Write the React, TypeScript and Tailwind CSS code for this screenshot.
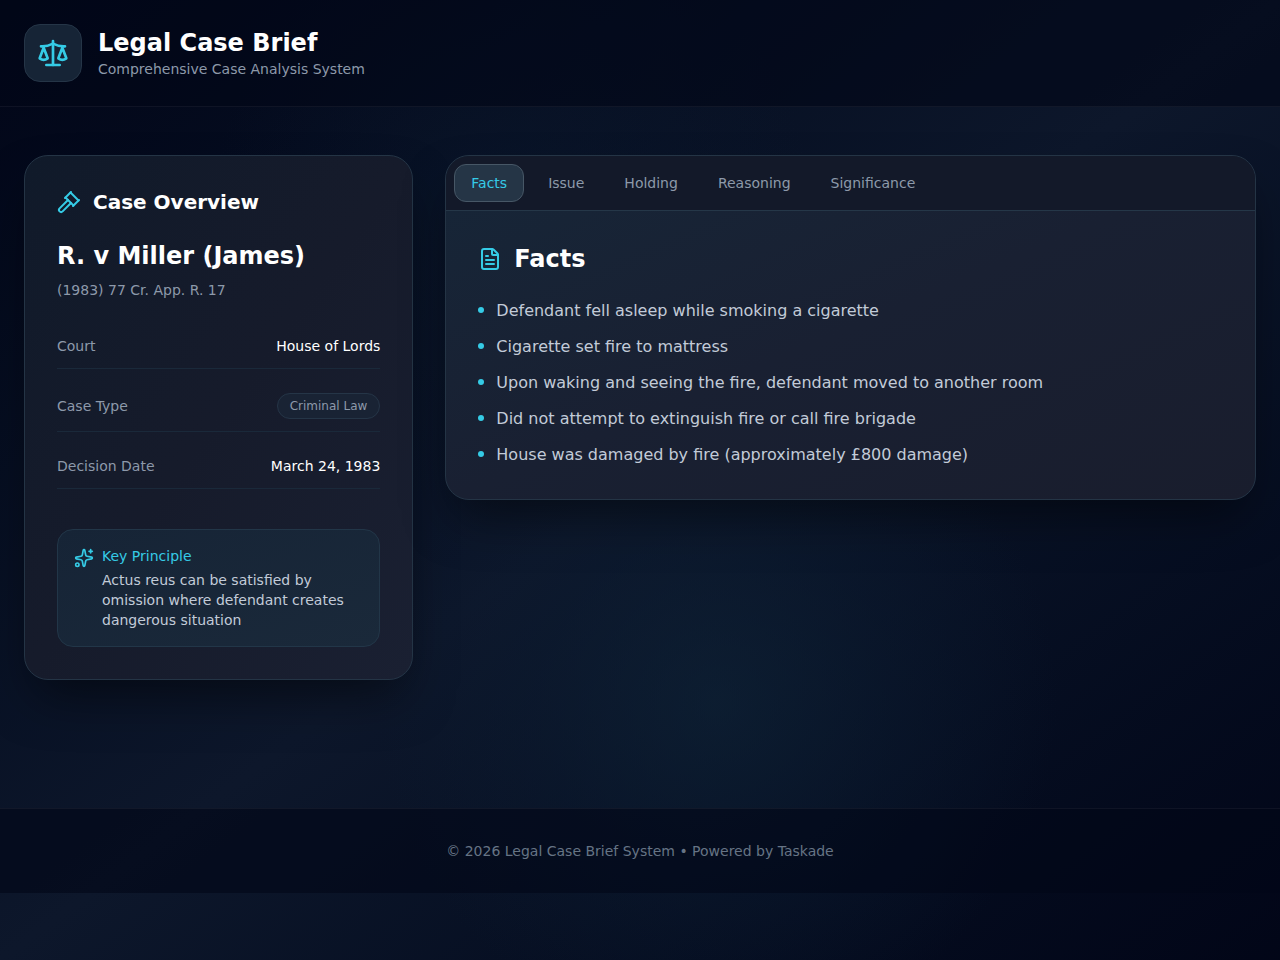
import { useState } from "react";
import { FileText, Gavel, Scale, Sparkles } from "lucide-react";

const tabs = ["Facts", "Issue", "Holding", "Reasoning", "Significance"];

const points: Record<string, string[]> = {
  Facts: [
    "Defendant fell asleep while smoking a cigarette",
    "Cigarette set fire to mattress",
    "Upon waking and seeing the fire, defendant moved to another room",
    "Did not attempt to extinguish fire or call fire brigade",
    "House was damaged by fire (approximately £800 damage)",
  ],
};

function SiteHeader() {
  return (
    <header className="border-b border-white/5 bg-slate-950/60">
      <div className="mx-auto flex max-w-7xl items-center gap-4 p-6">
        <div className="rounded-2xl border border-[#253547] bg-[#162436] p-3">
          <Scale className="size-8 text-[#35cbe6]" />
        </div>
        <div>
          <h1 className="text-2xl font-bold text-white">Legal Case Brief</h1>
          <p className="text-sm text-[#8d99aa]">Comprehensive Case Analysis System</p>
        </div>
      </div>
    </header>
  );
}

function CaseOverview() {
  return (
    <section className="rounded-3xl border border-[#243445] bg-linear-to-br from-[#101a2a] via-[#161b2b] to-[#1a2032] p-8 shadow-2xl shadow-black/50">
      <div className="mb-6 flex items-center gap-3">
        <Gavel className="size-6 text-[#35cbe6]" />
        <h2 className="text-xl font-semibold text-white">Case Overview</h2>
      </div>
      <h3 className="text-2xl font-bold text-white">R. v Miller (James)</h3>
      <p className="mt-2 text-sm text-[#8d99aa]">(1983) 77 Cr. App. R. 17</p>

      <dl className="mt-6 text-sm">
        <div className="flex items-center justify-between border-b border-[#1a293a] py-3">
          <dt className="text-[#8d99aa]">Court</dt>
          <dd className="font-medium text-white">House of Lords</dd>
        </div>
        <div className="mt-3 flex items-center justify-between border-b border-[#1a293a] py-3">
          <dt className="text-[#8d99aa]">Case Type</dt>
          <dd className="rounded-full border border-[#253547] bg-[#192334] px-3 py-1 text-xs text-[#8d99aa]">
            Criminal Law
          </dd>
        </div>
        <div className="mt-3 flex items-center justify-between border-b border-[#1a293a] py-3">
          <dt className="text-[#8d99aa]">Decision Date</dt>
          <dd className="font-medium text-white">March 24, 1983</dd>
        </div>
      </dl>

      <div className="mt-10 flex items-start gap-2 rounded-2xl border border-[#223648] bg-linear-to-br from-[#162436] to-[#1a293a] p-4">
        <Sparkles className="mt-0.5 size-5 shrink-0 text-[#35cbe6]" />
        <div className="text-sm">
          <h4 className="font-medium text-[#35cbe6]">Key Principle</h4>
          <p className="mt-1 text-[#c2cbd8]">
            Actus reus can be satisfied by omission where defendant creates dangerous situation
          </p>
        </div>
      </div>
    </section>
  );
}

function CaseDetails() {
  const [active, setActive] = useState("Facts");

  return (
    <section className="overflow-hidden rounded-3xl border border-[#243445] bg-linear-to-br from-[#162638] via-[#192032] to-[#191d2d] shadow-2xl shadow-black/50 lg:col-span-2">
      <div role="tablist" className="flex gap-2 overflow-x-auto border-b border-[#253748] bg-[#131929] p-2">
        {tabs.map((tab) => (
          <button
            key={tab}
            type="button"
            role="tab"
            aria-selected={tab === active}
            onClick={() => setActive(tab)}
            className={
              tab === active
                ? "rounded-xl border border-[#475766] bg-[#253546] px-4 py-2 text-sm font-medium text-[#35cbe6]"
                : "rounded-xl px-4 py-2 text-sm font-medium text-[#8d99aa] hover:text-white"
            }
          >
            {tab}
          </button>
        ))}
      </div>
      <div role="tabpanel" className="p-8">
        <div className="mb-6 flex items-center gap-3">
          <FileText className="size-6 text-[#35cbe6]" />
          <h2 className="text-2xl font-bold text-white">{active}</h2>
        </div>
        <ul className="space-y-3">
          {(points[active] ?? []).map((point) => (
            <li key={point} className="flex items-start gap-3 text-base text-[#c2cbd8]">
              <span className="mt-2 size-1.5 shrink-0 rounded-full bg-[#35cbe6]" />
              {point}
            </li>
          ))}
        </ul>
      </div>
    </section>
  );
}

export default function App() {
  return (
    <div className="min-h-screen bg-linear-to-br from-slate-950 via-[#0d172b] to-slate-950 font-['DejaVu_Sans',sans-serif]">
      <div className="min-h-screen bg-[radial-gradient(circle_at_56%_73%,#10283c80_0%,#0c1d3260_18%,transparent_34%),radial-gradient(circle_at_40%_22%,#0d1b3070_0%,transparent_28%)]">
        <SiteHeader />
        <main className="mx-auto grid max-w-7xl items-start gap-8 px-6 py-12 lg:grid-cols-3">
          <CaseOverview />
          <CaseDetails />
        </main>
        <footer className="mt-20 border-t border-white/5 bg-slate-950/60 px-6 py-8 text-center text-sm text-[#667485]">
          © 2026 Legal Case Brief System • Powered by Taskade
        </footer>
      </div>
    </div>
  );
}
